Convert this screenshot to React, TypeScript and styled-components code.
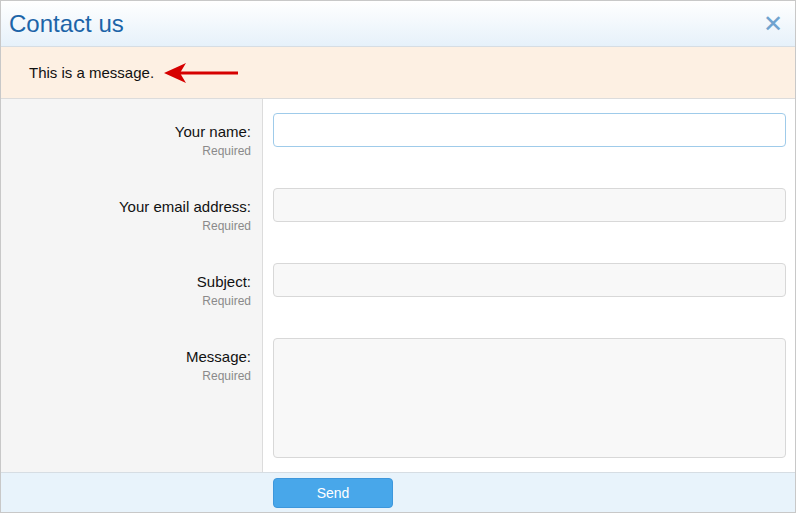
import styled, { createGlobalStyle } from "styled-components";

const Global = createGlobalStyle`
    html, body { margin: 0; padding: 0; background: #fff; }
    body { font-family: "Liberation Sans", Arial, sans-serif; }
    * { box-sizing: border-box; }
`;

const Dialog = styled.div`
    width: 796px;
    height: 513px;
    border: 1px solid #c8c8c8;
    display: flex;
    flex-direction: column;
    overflow: hidden;
`;

const Header = styled.div`
    height: 46px;
    display: flex;
    align-items: center;
    justify-content: space-between;
    padding: 0 12px 0 8px;
    background: linear-gradient(180deg, #ffffff, #e6f1fa);
    border-bottom: 1px solid #d6dde3;
`;

const Title = styled.h1`
    margin: 0;
    font-size: 24px;
    font-weight: normal;
    color: #1c64a8;
`;

const Close = styled.span`
    font-size: 24px;
    color: #6fa3cf;
    line-height: 1;
`;

const Notice = styled.div`
    height: 52px;
    display: flex;
    align-items: center;
    gap: 10px;
    padding-left: 28px;
    background: #fdf0e3;
    border-bottom: 1px solid #dcdcdc;
    font-size: 15px;
    color: #111;
`;

const Body = styled.div`
    flex: 1;
    display: grid;
    grid-template-columns: 262px 1fr;
`;

const LabelCol = styled.div`
    background: #f5f5f5;
    border-right: 1px solid #dcdcdc;
    padding: 24px 11px 0 0;
    display: flex;
    flex-direction: column;
    align-items: flex-end;
`;

const LabelBlock = styled.div<{ $h: number }>`
    height: ${p => p.$h}px;
    text-align: right;
`;

const Label = styled.div`
    font-size: 15px;
    color: #111;
`;

const Req = styled.div`
    font-size: 12px;
    color: #8a8a8a;
    margin-top: 4px;
`;

const FieldCol = styled.div`
    padding: 14px 9px 0 10px;
    display: flex;
    flex-direction: column;
    gap: 41px;
`;

const Input = styled.div<{ $focus?: boolean }>`
    height: 34px;
    border-radius: 4px;
    border: 1px solid ${p => (p.$focus ? "#9fcbea" : "#d8d8d8")};
    background: ${p => (p.$focus ? "#fff" : "#f8f8f8")};
`;

const TextArea = styled(Input)`
    height: 120px;
`;

const Footer = styled.div`
    height: 40px;
    background: #e8f3fb;
    border-top: 1px solid #d6dde3;
    padding: 5px 0 0 272px;
`;

const SendBtn = styled.button`
    width: 120px;
    height: 30px;
    border: 1px solid #3d97dc;
    border-radius: 4px;
    background: #48a7ea;
    color: #fff;
    font-family: inherit;
    font-size: 14px;
`;

const fields = [
    { label: "Your name:", h: 75 },
    { label: "Your email address:", h: 75 },
    { label: "Subject:", h: 75 },
    { label: "Message:", h: 75 },
];

export default function App() {
    return (
        <>
            <Global />
            <Dialog>
                <Header>
                    <Title>Contact us</Title>
                    <Close>✕</Close>
                </Header>
                <Notice>
                    This is a message.
                    <svg width="76" height="24" viewBox="0 0 76 24">
                        <line x1="16" y1="12" x2="74" y2="12" stroke="#d60000" strokeWidth="3" />
                        <path d="M0 12 L22 2 L16 12 L22 22 Z" fill="#d60000" />
                    </svg>
                </Notice>
                <Body>
                    <LabelCol>
                        {fields.map(f => (
                            <LabelBlock key={f.label} $h={f.h}>
                                <Label>{f.label}</Label>
                                <Req>Required</Req>
                            </LabelBlock>
                        ))}
                    </LabelCol>
                    <FieldCol>
                        <Input $focus />
                        <Input />
                        <Input />
                        <TextArea />
                    </FieldCol>
                </Body>
                <Footer>
                    <SendBtn>Send</SendBtn>
                </Footer>
            </Dialog>
        </>
    );
}
